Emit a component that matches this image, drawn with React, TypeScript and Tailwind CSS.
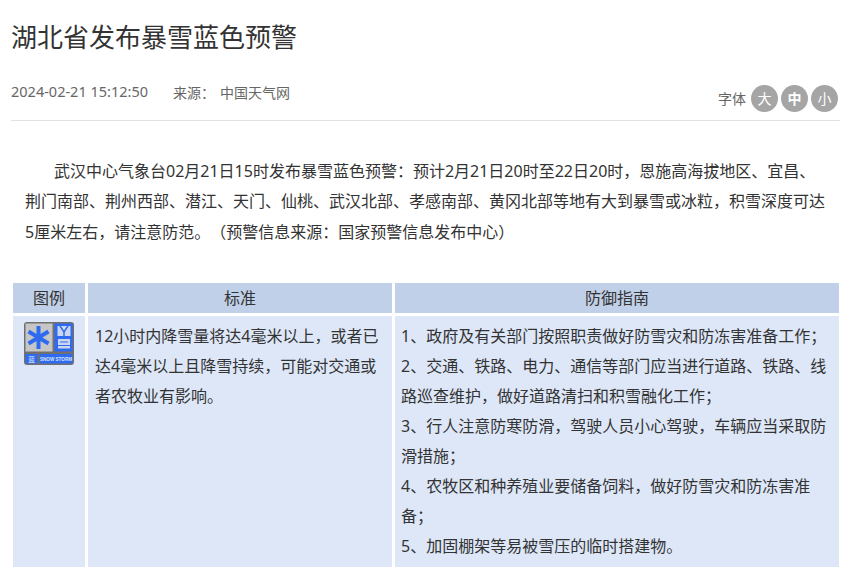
const sans = "font-['Noto_Sans','Noto_Sans_CJK_SC',sans-serif] [text-spacing-trim:space-all]";

const guide = [
  "1、政府及有关部门按照职责做好防雪灾和防冻害准备工作；",
  "2、交通、铁路、电力、通信等部门应当进行道路、铁路、线路巡查维护，做好道路清扫和积雪融化工作；",
  "3、行人注意防寒防滑，驾驶人员小心驾驶，车辆应当采取防滑措施；",
  "4、农牧区和种养殖业要储备饲料，做好防雪灾和防冻害准备；",
  "5、加固棚架等易被雪压的临时搭建物。",
];

const SnowIcon = () => (
  <svg width="50" height="43" viewBox="0 0 50 43" className="block">
    <rect width="50" height="43" rx="3" fill="#707070" />
    <rect x="1.5" y="1.5" width="27" height="28" fill="#c6c6c6" />
    <g stroke="#2f6bf0" strokeWidth="4">
      <path d="M14.500 4v23M4.500 9.500l20 12M24.500 9.500l-20 12" />
    </g>
    <rect x="30.500" y="1.5" width="18" height="28" fill="#2f6bf0" />
    <path d="M33.500 4h13v10h-13z" fill="#c9d6ee" />
    <path d="M36 4l4 6 4-6M40 10v4" stroke="#2f6bf0" strokeWidth="1.500" fill="none" />
    <rect x="34" y="17" width="12" height="9.500" fill="#c9d6ee" />
    <path d="M36 20h8M34 23.500h12" stroke="#2f6bf0" />
    <rect x="1.500" y="32" width="12" height="9.500" fill="#2f6bf0" />
    <rect x="15.500" y="32" width="33" height="9.500" fill="#2f6bf0" />
    <text x="7.500" y="39.500" fontSize="7" fill="#dbe4f5" textAnchor="middle" fontFamily="Noto Sans CJK SC">蓝</text>
    <text x="32" y="38.800" fontSize="4.600" fontWeight="700" fill="#dbe4f5" textAnchor="middle" fontFamily="Liberation Sans">SNOW STORM</text>
  </svg>
);

export default function App() {
  return (
    <div className={`h-[580px] w-[850px] overflow-hidden bg-white ${sans} text-[#333]`}>
      <div className="ml-[11px] w-[829px]">
        <h1 className="pt-[18px] text-[26px] leading-[38px] font-normal">湖北省发布暴雪蓝色预警</h1>

        <div className="mt-[21px] flex h-[44px] items-start justify-between border-b border-[#e2e2e2] text-[14px] text-[#666]">
          <div className="flex h-[30px] items-center">
            <span className="text-[14.500px]">2024-02-21 15:12:50</span>
            <span className="ml-[25px]">来源：</span>
            <span className="ml-[5px]">中国天气网</span>
          </div>
          <div className="mt-[7px] mr-[2px] flex h-[29px] items-center">
            <span className="mr-[5px]">字体</span>
            <div className="flex gap-[3px]">
              {["大", "中", "小"].map((t) => (
                <span
                  key={t}
                  className={`flex h-[27px] w-[27px] items-center justify-center rounded-full bg-[#a5a5a5] text-[14px] text-white ${t === "中" ? "font-bold" : ""}`}
                >
                  {t}
                </span>
              ))}
            </div>
          </div>
        </div>
      </div>

      <p className="mt-[35px] mr-[20px] ml-[25px] indent-[29px] text-[16px] leading-[30.400px]">
        武汉中心气象台02月21日15时发布暴雪蓝色预警：预计2月21日20时至22日20时，恩施高海拔地区、宜昌、荆门南部、荆州西部、潜江、天门、仙桃、武汉北部、孝感南部、黄冈北部等地有大到暴雪或冰粒，积雪深度可达5厘米左右，请注意防范。（预警信息来源：国家预警信息发布中心）
      </p>

      <div className="mt-[36px] ml-[13px] grid w-[826px] grid-cols-[72px_304px_444px] gap-[3px] text-[16px]">
        <div className="flex h-[30px] items-center justify-center bg-[#c0d0e8]">图例</div>
        <div className="flex h-[30px] items-center justify-center bg-[#c0d0e8]">标准</div>
        <div className="flex h-[30px] items-center justify-center bg-[#c0d0e8]">防御指南</div>

        <div className="h-[251px] bg-[#dde7f8] pt-[6px] pl-[11px]">
          <SnowIcon />
        </div>
        <div className="bg-[#dde7f8] px-[7px] pt-[5px] leading-[30px]">
          12小时内降雪量将达4毫米以上，或者已达4毫米以上且降雪持续，可能对交通或者农牧业有影响。
        </div>
        <div className="bg-[#dde7f8] px-[6px] pt-[5px] leading-[30px]">
          {guide.map((line) => (
            <p key={line}>{line}</p>
          ))}
        </div>
      </div>
    </div>
  );
}
